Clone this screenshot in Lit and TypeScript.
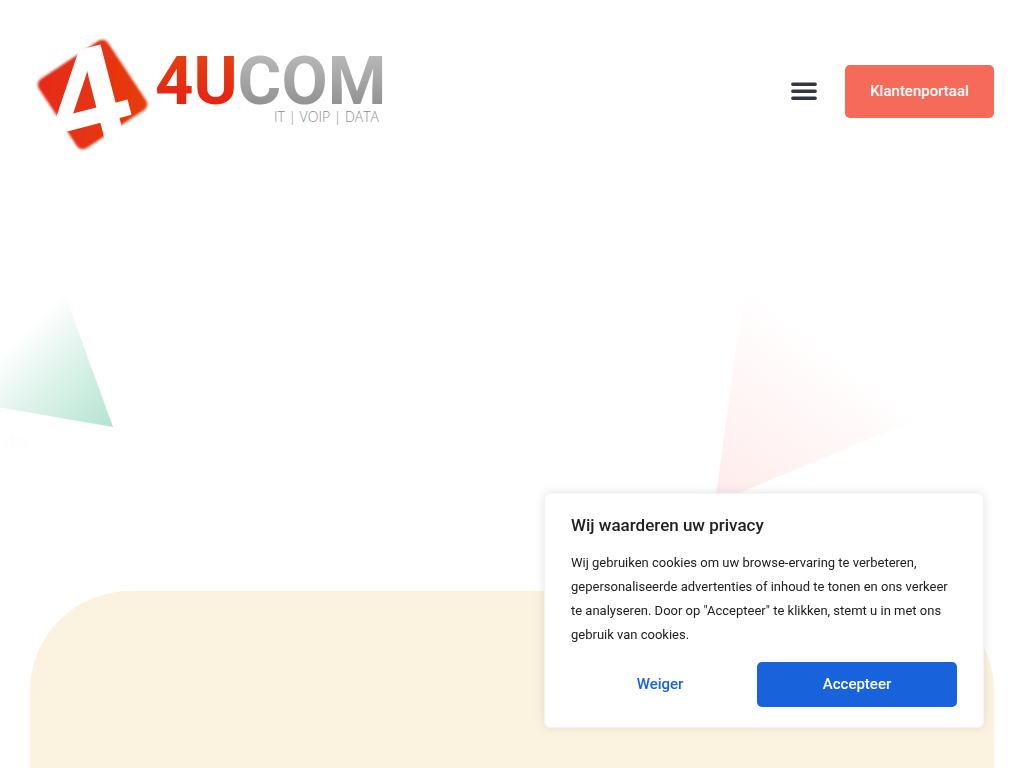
import { LitElement, html, svg, css } from "lit";
import { customElement, state } from "lit/decorators.js";

@customElement("site-logo")
class SiteLogo extends LitElement {
  static styles = css`
    :host { display: block; }
    .logo { display: block; width: 360px; height: 120px; overflow: visible; }
    .tile-digit { font: 700 135px "Liberation Sans", sans-serif; fill: #fff; stroke: #fff; stroke-width: 2; }
    .word { font: 700 67px Roboto, "Liberation Sans", sans-serif; }
    .tagline { font: 300 14px "Open Sans", "Noto Sans", sans-serif; fill: #8c8c8c; }
  `;

  render() {
    return html`
      <svg class="logo" viewBox="30 35 360 120" role="img" aria-label="4UCOM IT, VOIP, DATA">
        ${svg`
          <defs>
            <linearGradient id="tile" x1="0" y1="0" x2="1" y2="1">
              <stop offset="0" stop-color="#e62a1a"></stop>
              <stop offset="1" stop-color="#e63d0c"></stop>
            </linearGradient>
            <linearGradient id="red" x1="0" y1="55" x2="0" y2="105" gradientUnits="userSpaceOnUse">
              <stop offset="0" stop-color="#e63f10"></stop>
              <stop offset="1" stop-color="#e62213"></stop>
            </linearGradient>
            <linearGradient id="grey" x1="0" y1="55" x2="0" y2="105" gradientUnits="userSpaceOnUse">
              <stop offset="0" stop-color="#b8b8b8"></stop>
              <stop offset="1" stop-color="#929292"></stop>
            </linearGradient>
            <filter id="soft"><feGaussianBlur stdDeviation="0.9"></feGaussianBlur></filter>
          </defs>
          <rect x="51" y="53" width="83" height="83" rx="7" fill="url(#tile)"
            transform="rotate(-33.5 92.5 94.5)" filter="url(#soft)"></rect>
          <text class="tile-digit" transform="translate(63 151) rotate(-14.5)">4</text>
          <text class="word" x="155" y="104"><tspan fill="url(#red)">4U</tspan><tspan fill="url(#grey)">COM</tspan></text>
          <text class="tagline" x="379" y="122" text-anchor="end">IT | VOIP | DATA</text>
        `}
      </svg>`;
  }
}

@customElement("cookie-notice")
class CookieNotice extends LitElement {
  static styles = css`
    :host { display: block; }
    .box {
      box-sizing: border-box; background: #fff; border: 1px solid #f4f4f4;
      border-radius: 6px; padding: 19px 26px 20px; color: #212121;
      box-shadow: 0 -1px 10px 0 rgba(172, 171, 171, 0.3);
    }
    .title { margin: 0 0 14px; font-size: 17px; line-height: 24px; font-weight: 500; }
    .copy { margin: 0 0 15px; font-size: 13px; line-height: 24px; }
    .actions { display: flex; gap: 8px; }
    .btn {
      flex: 1 1 0; height: 45px; border: 0; border-radius: 5px; padding: 0 12px 2px;
      font: 500 15px/24px Roboto, sans-serif; cursor: pointer;
      background: transparent; color: #1863dc;
    }
    .accept { flex: 0 0 200px; background: #1863dc; color: #fff; }
  `;

  render() {
    const close = () => this.dispatchEvent(new CustomEvent("dismiss"));
    return html`
      <section class="box" aria-labelledby="t">
        <h2 class="title" id="t">Wij waarderen uw privacy</h2>
        <p class="copy">Wij gebruiken cookies om uw browse-ervaring te verbeteren, gepersonaliseerde advertenties of inhoud te tonen en ons verkeer te analyseren. Door op "Accepteer" te klikken, stemt u in met ons gebruik van cookies.</p>
        <div class="actions">
          <button class="btn" @click=${close}>Weiger</button>
          <button class="btn accept" @click=${close}>Accepteer</button>
        </div>
      </section>`;
  }
}

@customElement("app-root")
class AppRoot extends LitElement {
  static styles = css`
    :host {
      display: flex; flex-direction: column; height: 100vh; overflow: hidden;
      position: relative; background: #fff; font-family: Roboto, sans-serif;
    }
    .header {
      display: flex; align-items: center; justify-content: space-between;
      padding: 35px 30px 0; position: relative; z-index: 1;
    }
    .logo-link { display: block; }
    .nav { display: flex; align-items: center; gap: 28px; margin-bottom: 8px; }
    .menu { display: block; border: 0; padding: 0; background: none; cursor: pointer; }
    .menu svg { display: block; width: 26px; height: 18px; }
    .portal {
      box-sizing: border-box; width: 149px; padding: 14px 0 15px; text-align: center;
      border-radius: 5px; background: #f66a59; color: #fff;
      font-size: 15px; line-height: 24px; font-weight: 500; text-decoration: none;
    }
    .hero { box-sizing: border-box; flex: 0 0 436px; padding: 275px 4px 0; }
    .fading { margin: 0; font-size: 18px; line-height: 24px; color: #fdfdfd; }
    .shape { position: absolute; display: block; }
    .green { left: 0; top: 290px; width: 120px; height: 140px; }
    .pink { right: 114px; top: 290px; width: 200px; height: 220px; }
    .panel { flex: 1; margin: 0 30px; border-radius: 100px 100px 0 0; background: #fbf2df; }
    .notice { position: fixed; right: 40px; bottom: 40px; width: 440px; max-width: calc(100vw - 80px); z-index: 2; }
  `;

  @state() open = true;

  render() {
    return html`
      <header class="header">
        <a class="logo-link" href="#" aria-label="4UCOM"><site-logo></site-logo></a>
        <nav class="nav">
          <button class="menu" aria-label="Menu">
            <svg viewBox="0 0 26 18" stroke="#33353f" stroke-width="3.6" stroke-linecap="round">
              <path d="M1.9 2.3H24.1M1.9 9.3H24.1M1.9 16.2H24.1"></path>
            </svg>
          </button>
          <a class="portal" href="#">Klantenportaal</a>
        </nav>
      </header>
      <svg class="shape green" viewBox="0 0 120 140" aria-hidden="true">
        <defs><linearGradient id="g" x1="21" y1="44" x2="113" y2="137" gradientUnits="userSpaceOnUse">
          <stop offset="0" stop-color="#b3e3d0" stop-opacity="0"></stop>
          <stop offset="1" stop-color="#b3e3d0"></stop>
        </linearGradient></defs>
        <path d="M64 2L113 137L-38 111Z" fill="url(#g)"></path>
      </svg>
      <svg class="shape pink" viewBox="710 290 200 220" aria-hidden="true">
        <defs><linearGradient id="p" x1="715" y1="503" x2="828" y2="341" gradientUnits="userSpaceOnUse">
          <stop offset="0" stop-color="#ffebeb"></stop>
          <stop offset="1" stop-color="#ffebeb" stop-opacity="0"></stop>
        </linearGradient></defs>
        <path d="M744 290L910 422L715 503Z" fill="url(#p)"></path>
      </svg>
      <main class="hero"><p class="fading">rke</p></main>
      <section class="panel"></section>
      ${this.open
        ? html`<cookie-notice class="notice" @dismiss=${() => (this.open = false)}></cookie-notice>`
        : ""}`;
  }
}
